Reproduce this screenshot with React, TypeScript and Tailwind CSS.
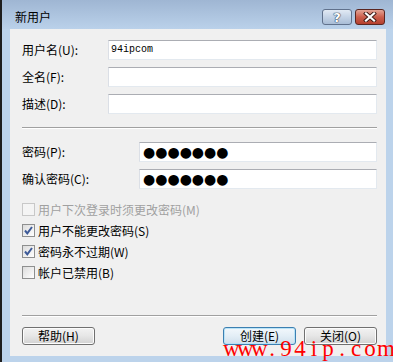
import React from 'react';

const ui = { fontFamily: '"Noto Sans CJK SC", "Liberation Sans", sans-serif' };

const TextBox = ({ children, className = '' }: { children?: React.ReactNode; className?: string }) => (
  <div
    className={`h-[20px] bg-white border border-[#e3e9ef] border-t-[#abadb3] border-l-[#dbdfe6] flex items-center px-[2px] ${className}`}
  >
    {children}
  </div>
);

const Separator = ({ className = '' }: { className?: string }) => (
  <div className={`h-[2px] border-t border-[#a0a0a0] border-b border-b-white ${className}`} />
);

const CheckRow = ({ label, checked, disabled }: { label: string; checked?: boolean; disabled?: boolean }) => (
  <div className="h-[21px] flex items-center">
    <div
      className={`w-[13px] h-[13px] border flex items-center justify-center ${
        disabled ? 'border-[#c8c8c8] bg-[#f4f4f4]' : 'border-[#8e8f8f] bg-gradient-to-br from-[#dcdcdc] to-white'
      }`}
    >
      {checked && (
        <svg width="11" height="11" viewBox="0 0 11 11">
          <path d="M2 5.5 L4.3 8.3 L9 2" fill="none" stroke="#3d5a98" strokeWidth="2" />
        </svg>
      )}
    </div>
    <span className={`ml-[3px] text-[12px] leading-none ${disabled ? 'text-[#a0a0a0]' : 'text-black'}`}>{label}</span>
  </div>
);

const Button = ({ label, primary }: { label: string; primary?: boolean }) => (
  <div
    className={`w-[73px] h-[18px] rounded-[3px] border flex items-center justify-center text-[12px] leading-none text-black ${
      primary
        ? 'border-[#3c7fb1] bg-gradient-to-b from-[#f2f8fc] via-[#e3eef6] to-[#cfdfec] shadow-[inset_0_0_0_1px_#b9e3f7]'
        : 'border-[#707070] bg-gradient-to-b from-[#f2f2f2] via-[#e6e6e6] to-[#d2d2d2] shadow-[inset_0_0_0_1px_#fcfcfc]'
    }`}
  >
    {label}
  </div>
);

const Dots = () => (
  <span className="text-[14px] leading-none ml-[1px]" style={{ fontFamily: '"DejaVu Sans", sans-serif' }}>
    ●●●●●●●
  </span>
);

const watermark = 'www.94ip.com';

export default function App() {
  return (
    <div className="w-[393px] h-[362px] relative overflow-hidden bg-[#bcd3eb] border-l-[2px] border-[#1e1e1e]" style={ui}>
      {/* title bar */}
      <div className="h-[29px] -ml-[2px] pl-[15px] pr-[8px] flex items-start bg-gradient-to-b from-[#9fb6d3] to-[#bad1ea]">
        <span className="mt-[11px] text-[12px] leading-none text-black">新用户</span>
        <div className="ml-auto mt-[9px] flex gap-[3px]">
          <div className="w-[30px] h-[16px] rounded-[3px] border border-[#60718c] bg-gradient-to-b from-[#e2eaf4] via-[#c4d3e6] to-[#a9bdd6] flex items-center justify-center">
            <span
              className="text-white text-[13px] font-bold leading-none"
              style={{ fontFamily: '"DejaVu Sans", sans-serif', textShadow: '0 0 1px #283850, 0 0 1px #283850, 0 0 1px #283850' }}
            >
              ?
            </span>
          </div>
          <div className="w-[30px] h-[16px] rounded-[3px] border border-[#5a2620] bg-gradient-to-b from-[#e3a496] via-[#cc5e4c] to-[#b4402e] flex items-center justify-center">
            <svg width="14" height="10" viewBox="0 0 14 10">
              <path d="M3 1.5 L11 8.5 M11 1.5 L3 8.5" stroke="#3b1a16" strokeWidth="4" strokeLinecap="square" />
              <path d="M3 1.5 L11 8.5 M11 1.5 L3 8.5" stroke="#ffffff" strokeWidth="2.2" strokeLinecap="square" />
            </svg>
          </div>
        </div>
      </div>

      {/* client area */}
      <div className="ml-[8px] mr-[7px] h-[327px] bg-[#f0f0f0] pt-[11px] pl-[12px] pr-[9px]">
        <div className="flex items-center">
          <span className="w-[86px] text-[12px] leading-none">用户名(U):</span>
          <TextBox className="flex-1">
            <span className="text-[10px] leading-none" style={{ fontFamily: '"Liberation Mono", monospace' }}>
              94ipcom
            </span>
          </TextBox>
        </div>
        <div className="flex items-center mt-[7px]">
          <span className="w-[86px] text-[12px] leading-none">全名(F):</span>
          <TextBox className="flex-1" />
        </div>
        <div className="flex items-center mt-[7px]">
          <span className="w-[86px] text-[12px] leading-none">描述(D):</span>
          <TextBox className="flex-1" />
        </div>

        <Separator className="mt-[13px]" />

        <div className="flex items-center mt-[13px]">
          <span className="w-[117px] text-[12px] leading-none">密码(P):</span>
          <TextBox className="flex-1">
            <Dots />
          </TextBox>
        </div>
        <div className="flex items-center mt-[7px]">
          <span className="w-[117px] text-[12px] leading-none">确认密码(C):</span>
          <TextBox className="flex-1">
            <Dots />
          </TextBox>
        </div>

        <div className="mt-[10px]">
          <CheckRow label="用户下次登录时须更改密码(M)" disabled />
          <CheckRow label="用户不能更改密码(S)" checked />
          <CheckRow label="密码永不过期(W)" checked />
          <CheckRow label="帐户已禁用(B)" />
        </div>

        <Separator className="mt-[32px]" />

        <div className="flex mt-[10px]">
          <Button label="帮助(H)" />
          <div className="ml-auto flex gap-[8px]">
            <Button label="创建(E)" primary />
            <Button label="关闭(O)" />
          </div>
        </div>
      </div>

      {/* watermark */}
      <div
        className="absolute left-[221px] top-[337px] flex text-[#ff0000] text-[23px] leading-none"
        style={{ fontFamily: '"Liberation Serif", serif' }}
      >
        {watermark.split('').map((c, i) => (
          <span key={i} className="w-[14px] text-center inline-block">
            {c}
          </span>
        ))}
      </div>
    </div>
  );
}
